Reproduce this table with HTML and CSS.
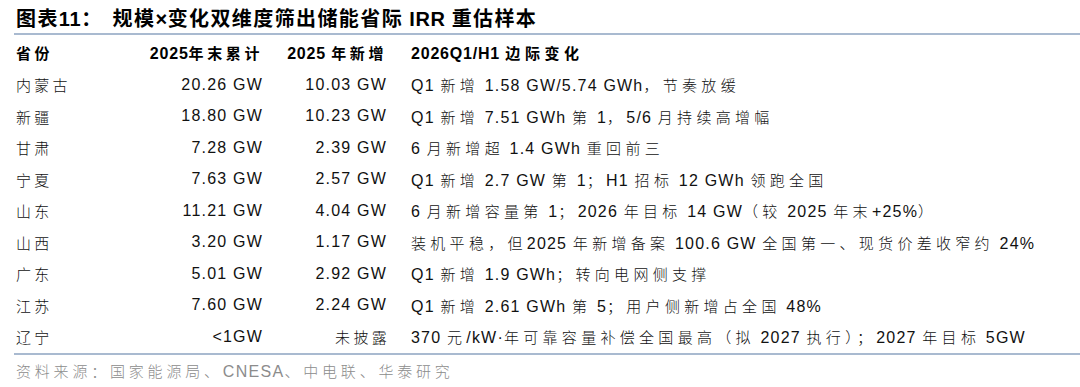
FILE: index.html
```html
<!DOCTYPE html>
<html lang="zh-CN">
<head>
<meta charset="utf-8">
<title>图表11</title>
<link rel="stylesheet" href="styles.css">
</head>
<body>
<div class="page">
  <div class="title"><span class="z">图表</span>11<span class="z">：</span><span class="gap"></span><span class="z">规模</span>×<span class="z">变化双维度筛出储能省际</span> IRR <span class="z">重估样本</span></div>
  <div class="table">
    <div class="row head">
      <div class="c1"><span class="z">省份</span></div>
      <div class="c2">2025<span class="z">年末累计</span></div>
      <div class="c3">2025 <span class="z">年新增</span></div>
      <div class="c4">2026Q1/H1 <span class="z">边际变化</span></div>
    </div>
    <div class="row">
      <div class="c1"><span class="z">内蒙古</span></div>
      <div class="c2">20.26 GW</div>
      <div class="c3">10.03 GW</div>
      <div class="c4">Q1 <span class="z">新增</span> 1.58 GW/5.74 GWh<span class="z">，节奏放缓</span></div>
    </div>
    <div class="row">
      <div class="c1"><span class="z">新疆</span></div>
      <div class="c2">18.80 GW</div>
      <div class="c3">10.23 GW</div>
      <div class="c4">Q1 <span class="z">新增</span> 7.51 GWh <span class="z">第</span> 1<span class="z">，</span>5/6 <span class="z">月持续高增幅</span></div>
    </div>
    <div class="row">
      <div class="c1"><span class="z">甘肃</span></div>
      <div class="c2">7.28 GW</div>
      <div class="c3">2.39 GW</div>
      <div class="c4">6 <span class="z">月新增超</span> 1.4 GWh <span class="z">重回前三</span></div>
    </div>
    <div class="row">
      <div class="c1"><span class="z">宁夏</span></div>
      <div class="c2">7.63 GW</div>
      <div class="c3">2.57 GW</div>
      <div class="c4">Q1 <span class="z">新增</span> 2.7 GW <span class="z">第</span> 1<span class="z">；</span>H1 <span class="z">招标</span> 12 GWh <span class="z">领跑全国</span></div>
    </div>
    <div class="row">
      <div class="c1"><span class="z">山东</span></div>
      <div class="c2">11.21 GW</div>
      <div class="c3">4.04 GW</div>
      <div class="c4">6 <span class="z">月新增容量第</span> 1<span class="z">；</span>2026 <span class="z">年目标</span> 14 GW<span class="z">（较</span> 2025 <span class="z">年末</span>+25%<span class="z">）</span></div>
    </div>
    <div class="row">
      <div class="c1"><span class="z">山西</span></div>
      <div class="c2">3.20 GW</div>
      <div class="c3">1.17 GW</div>
      <div class="c4"><span class="z">装机平稳，但</span>2025 <span class="z">年新增备案</span> 100.6 GW <span class="z">全国第一、现货价差收窄约</span> 24%</div>
    </div>
    <div class="row">
      <div class="c1"><span class="z">广东</span></div>
      <div class="c2">5.01 GW</div>
      <div class="c3">2.92 GW</div>
      <div class="c4">Q1 <span class="z">新增</span> 1.9 GWh<span class="z">；转向电网侧支撑</span></div>
    </div>
    <div class="row">
      <div class="c1"><span class="z">江苏</span></div>
      <div class="c2">7.60 GW</div>
      <div class="c3">2.24 GW</div>
      <div class="c4">Q1 <span class="z">新增</span> 2.61 GWh <span class="z">第</span> 5<span class="z">；用户侧新增占全国</span> 48%</div>
    </div>
    <div class="row last">
      <div class="c1"><span class="z">辽宁</span></div>
      <div class="c2">&lt;1GW</div>
      <div class="c3"><span class="z">未披露</span></div>
      <div class="c4">370 <span class="z">元</span>/kW·<span class="z">年可靠容量补偿全国最高（拟</span> 2027 <span class="z">执行）；</span>2027 <span class="z">年目标</span> 5GW</div>
    </div>
  </div>
  <div class="source"><span class="z">资料来源：国家能源局、</span>CNESA<span class="z">、中电联、华泰研究</span></div>
</div>
</body>
</html>
```

FILE: styles.css
```css
html, body {
  margin: 0;
  padding: 0;
  background: #ffffff;
}

body {
  font-family: "Liberation Sans", "Noto Sans CJK SC", sans-serif;
  color: #111111;
}

.page {
  margin-left: 14px;
  width: 1066px;
}

.z {
  font-family: "Noto Sans CJK SC", sans-serif;
  font-weight: 300;
  font-size: 15px;
  letter-spacing: 3.3px;
}

.title {
  height: 35px;
  box-sizing: border-box;
  padding: 5px 0 0 2px;
  border-bottom: 2px solid #a9bad0;
  font-size: 20px;
  line-height: 26px;
  font-weight: 700;
  color: #000000;
  white-space: nowrap;
  letter-spacing: 0.6px;
}

.title .z {
  font-size: 20px;
  font-weight: 700;
  letter-spacing: 1.4px;
}

.title .gap {
  display: inline-block;
  width: 10px;
}

.table {
  display: flex;
  flex-direction: column;
  border-bottom: 2px solid #a9bad0;
}

.row {
  display: grid;
  grid-template-columns: 130px 118px 124px 1fr;
  align-items: center;
  height: 31.5px;
  font-size: 16px;
  letter-spacing: 1.2px;
  white-space: nowrap;
}

.row.head {
  height: 34px;
  font-weight: 700;
  color: #000000;
  letter-spacing: 0.8px;
}

.row.head .z {
  font-weight: 700;
  letter-spacing: 3.6px;
}

.row.head .c4 .z {
  letter-spacing: 4.6px;
}

.c1 {
  padding-left: 2px;
}

.c2, .c3 {
  text-align: right;
  margin-right: -1px;
}

.row:not(.head) .c3 .z {
  margin-right: -3px;
}

.c4 {
  padding-left: 25px;
}

.c4 .z {
  letter-spacing: 4.3px;
}

.source {
  padding: 5px 0 0 2px;
  font-size: 16px;
  line-height: 22px;
  color: #8c8c8c;
  letter-spacing: 1.3px;
}

.source .z {
  letter-spacing: 3.8px;
}
```
